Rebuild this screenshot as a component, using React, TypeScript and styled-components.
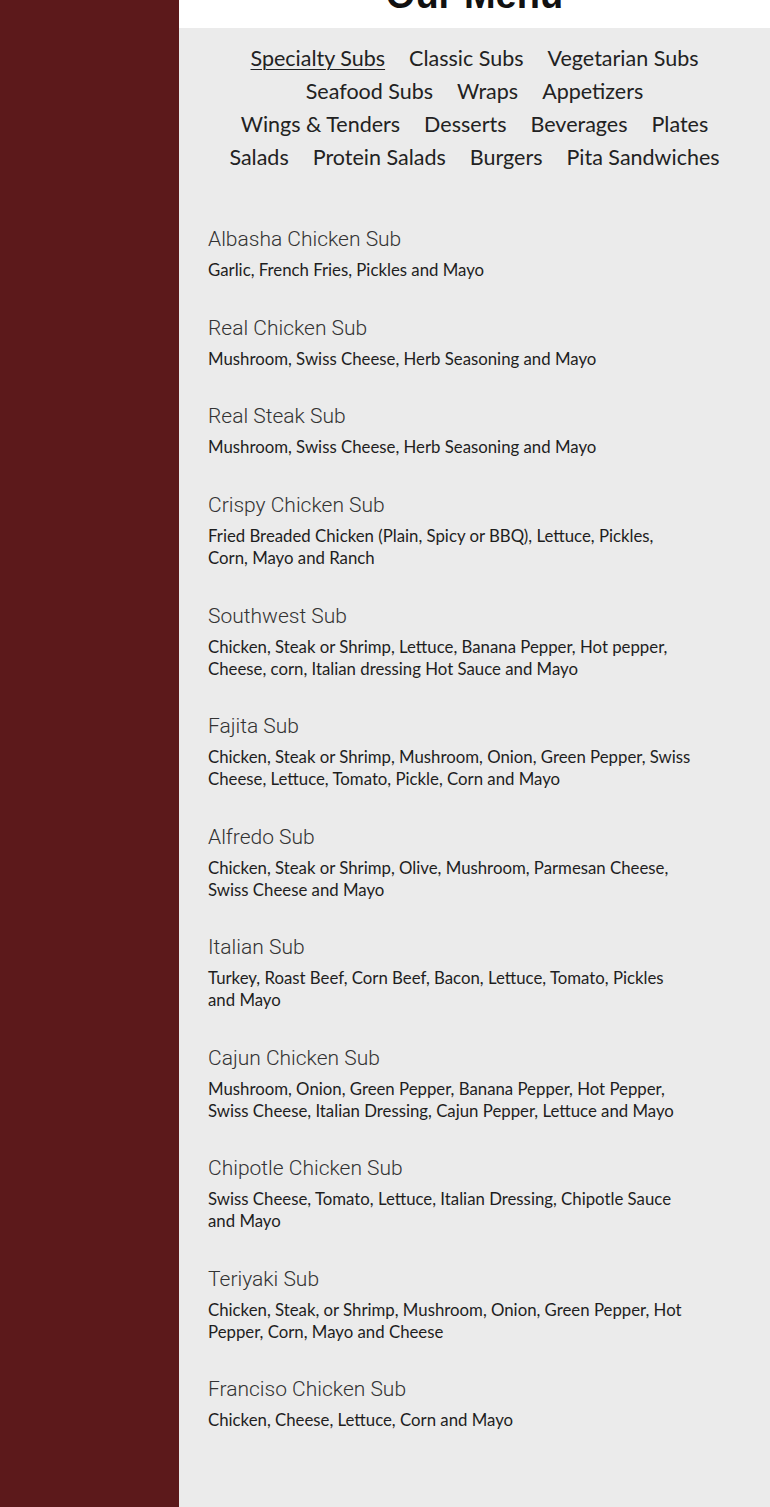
import React from "react";
import styled, { createGlobalStyle } from "styled-components";

const Global = createGlobalStyle`
  html, body { margin: 0; padding: 0; }
  body { background: #ebebeb; font-family: "Lato", "Liberation Sans", sans-serif; }
`;

const Page = styled.div`
  display: grid;
  grid-template-columns: 179px 1fr;
  min-height: 1507px;
`;

const Sidebar = styled.aside`
  background: #5c191b;
`;

const Main = styled.main`
  display: flex;
  flex-direction: column;
  background: #ebebeb;
`;

const Header = styled.header`
  height: 28px;
  background: #ffffff;
  overflow: hidden;
  display: flex;
  justify-content: center;
  align-items: flex-end;
`;

const Title = styled.h1`
  margin: 0 0 14px;
  font-family: "Liberation Sans", Arial, sans-serif;
  font-weight: 700;
  font-size: 38px;
  line-height: 38px;
  color: #111;
  height: 24px;
  display: flex;
  align-items: flex-end;
`;

const Nav = styled.nav`
  display: flex;
  flex-wrap: wrap;
  justify-content: center;
  column-gap: 24px;
  padding-top: 14px;
  width: 505px;
  margin: 0 auto;
`;

const NavLink = styled.a<{ $active?: boolean }>`
  font-family: "Lato", sans-serif;
  font-size: 21.5px;
  line-height: 33px;
  color: #222;
  text-decoration: ${(p) => (p.$active ? "underline" : "none")};
  text-underline-offset: 3px;
  text-decoration-thickness: 1px;
  white-space: nowrap;
`;

const List = styled.section`
  display: flex;
  flex-direction: column;
  padding: 51px 29px 60px;
`;

const Item = styled.article`
  margin-bottom: 32.95px;
`;

const ItemName = styled.h3`
  margin: 0 0 6px;
  font-family: "Roboto", sans-serif;
  font-weight: 300;
  font-size: 21px;
  line-height: 28px;
  color: #333;
`;

const ItemDesc = styled.p`
  margin: 0;
  max-width: 486px;
  font-family: "Lato", sans-serif;
  font-size: 16.8px;
  line-height: 21.8px;
  color: #1e1e1e;
`;

const navItems = [
  "Specialty Subs",
  "Classic Subs",
  "Vegetarian Subs",
  "Seafood Subs",
  "Wraps",
  "Appetizers",
  "Wings & Tenders",
  "Desserts",
  "Beverages",
  "Plates",
  "Salads",
  "Protein Salads",
  "Burgers",
  "Pita Sandwiches",
];

const menu: [string, string][] = [
  ["Albasha Chicken Sub", "Garlic, French Fries, Pickles and Mayo"],
  ["Real Chicken Sub", "Mushroom, Swiss Cheese, Herb Seasoning and Mayo"],
  ["Real Steak Sub", "Mushroom, Swiss Cheese, Herb Seasoning and Mayo"],
  ["Crispy Chicken Sub", "Fried Breaded Chicken (Plain, Spicy or BBQ), Lettuce, Pickles, Corn, Mayo and Ranch"],
  ["Southwest Sub", "Chicken, Steak or Shrimp, Lettuce, Banana Pepper, Hot pepper, Cheese, corn, Italian dressing Hot Sauce and Mayo"],
  ["Fajita Sub", "Chicken, Steak or Shrimp, Mushroom, Onion, Green Pepper, Swiss Cheese, Lettuce, Tomato, Pickle, Corn and Mayo"],
  ["Alfredo Sub", "Chicken, Steak or Shrimp, Olive, Mushroom, Parmesan Cheese, Swiss Cheese and Mayo"],
  ["Italian Sub", "Turkey, Roast Beef, Corn Beef, Bacon, Lettuce, Tomato, Pickles and Mayo"],
  ["Cajun Chicken Sub", "Mushroom, Onion, Green Pepper, Banana Pepper, Hot Pepper, Swiss Cheese, Italian Dressing, Cajun Pepper, Lettuce and Mayo"],
  ["Chipotle Chicken Sub", "Swiss Cheese, Tomato, Lettuce, Italian Dressing, Chipotle Sauce and Mayo"],
  ["Teriyaki Sub", "Chicken, Steak, or Shrimp, Mushroom, Onion, Green Pepper, Hot Pepper, Corn, Mayo and Cheese"],
  ["Franciso Chicken Sub", "Chicken, Cheese, Lettuce, Corn and Mayo"],
];

export default function App() {
  return (
    <>
      <Global />
      <Page>
        <Sidebar />
        <Main>
          <Header>
            <Title>Our Menu</Title>
          </Header>
          <Nav>
            {navItems.map((n, i) => (
              <NavLink key={n} href="#" $active={i === 0}>
                {n}
              </NavLink>
            ))}
          </Nav>
          <List>
            {menu.map(([name, desc]) => (
              <Item key={name}>
                <ItemName>{name}</ItemName>
                <ItemDesc>{desc}</ItemDesc>
              </Item>
            ))}
          </List>
        </Main>
      </Page>
    </>
  );
}
